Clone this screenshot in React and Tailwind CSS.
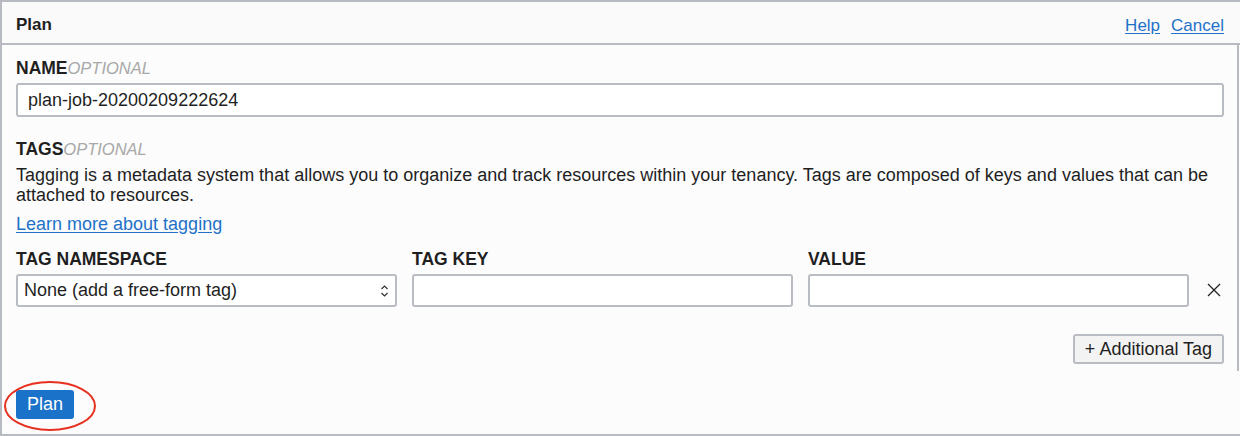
function Label({ name, optional }) {
    return (
        <div className="text-[17.5px] leading-[20px] text-[#1f1f1f]">
            <span className="font-bold">{name}</span>
            {optional && <span className="italic font-light text-[#a8a8a8] text-[16.5px]">OPTIONAL</span>}
        </div>
    );
}

function UpDown() {
    return (
        <svg width="9" height="14" viewBox="0 0 9 14" fill="none" stroke="#333" strokeWidth="1.2">
            <path d="M1.5 5 L4.5 2 L7.5 5" />
            <path d="M1.5 9 L4.5 12 L7.5 9" />
        </svg>
    );
}

function CloseIcon() {
    return (
        <svg width="14" height="14" viewBox="0 0 14 14" fill="none" stroke="#222" strokeWidth="1.3">
            <path d="M1 1 L13 13" />
            <path d="M13 1 L1 13" />
        </svg>
    );
}

export default function App() {
    return (
        <div
            className="relative w-[1240px] h-[436px] bg-[#fcfcfc] border-l-2 border-t-2 border-b-2 border-[#b7bbc1] flex flex-col text-[#1f1f1f]"
            style={{ fontFamily: '"Liberation Sans", Arial, sans-serif' }}
        >
            {/* Header */}
            <div className="h-[43px] flex items-center justify-between pl-[14px] pr-[16px] border-b-2 border-[#b7bbc1] bg-[#fafafa]">
                <div className="text-[17px] font-bold pt-[5px]">Plan</div>
                <div className="flex gap-[11px] text-[17px] text-[#1f72c8] pt-[6px]">
                    <a className="underline underline-offset-2 cursor-pointer">Help</a>
                    <a className="underline underline-offset-2 cursor-pointer">Cancel</a>
                </div>
            </div>

            {/* Body */}
            <div className="h-[326px] border-r-2 border-[#b7bbc1] mr-[1px] pl-[14px] pr-[13px] pt-[13px] flex flex-col">
                <Label name="NAME" optional />
                <div className="mt-[5px] h-[34px] bg-white border-2 border-[#b9bdc3] rounded-[3px] flex items-center px-[10px] text-[18px]">
                    plan-job-20200209222624
                </div>

                <div className="mt-[22px]">
                    <Label name="TAGS" optional />
                </div>
                <p className="mt-[6px] text-[18px] leading-[20px] text-[#1f1f1f]">
                    Tagging is a metadata system that allows you to organize and track resources within your tenancy. Tags are composed of keys and values that can be attached to resources.
                </p>
                <a className="mt-[9px] text-[18px] leading-[20px] text-[#1f72c8] underline underline-offset-2 w-fit cursor-pointer">
                    Learn more about tagging
                </a>

                <div className="mt-[15px] flex gap-[15px]">
                    <div className="w-[381px]">
                        <Label name="TAG NAMESPACE" />
                        <div className="mt-[5px] h-[33px] bg-white border-2 border-[#b9bdc3] rounded-[3px] flex items-center justify-between pl-[6px] pr-[6px] text-[18px]">
                            <span>None (add a free-form tag)</span>
                            <UpDown />
                        </div>
                    </div>
                    <div className="w-[381px]">
                        <Label name="TAG KEY" />
                        <div className="mt-[5px] h-[33px] bg-white border-2 border-[#b9bdc3] rounded-[3px]" />
                    </div>
                    <div className="w-[381px]">
                        <Label name="VALUE" />
                        <div className="mt-[5px] h-[33px] bg-white border-2 border-[#b9bdc3] rounded-[3px]" />
                    </div>
                    <div className="flex-1 flex items-end justify-center pb-[10px]">
                        <CloseIcon />
                    </div>
                </div>

                <div className="mt-[27px] flex justify-end">
                    <button className="h-[30px] w-[151px] bg-[#f3f3f3] border-2 border-[#b9bdc3] rounded-[3px] text-[18px] text-[#1f1f1f]">
                        + Additional Tag
                    </button>
                </div>
            </div>

            {/* Footer */}
            <div className="flex-1 pl-[14px] pt-[19px]">
                <button className="h-[29px] w-[58px] bg-[#1b72c9] text-white text-[18px] rounded-[3px]">
                    Plan
                </button>
            </div>

            {/* Annotation */}
            <svg className="absolute left-[1px] top-[377px] pointer-events-none" width="96" height="54" viewBox="0 0 96 54">
                <ellipse cx="47" cy="27" rx="45" ry="24" fill="none" stroke="#e8301f" strokeWidth="2" />
            </svg>
        </div>
    );
}
